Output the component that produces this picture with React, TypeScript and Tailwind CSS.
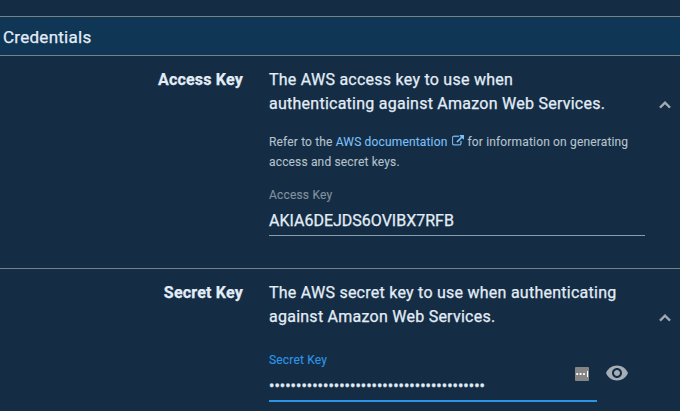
import React from "react";

const Chevron = () => (
  <svg viewBox="0 0 24 24" className="h-[22px] w-[22px] shrink-0" fill="#a3abb3">
    <path d="M12 8l-6 6 1.41 1.41L12 10.83l4.59 4.58L18 14z" stroke="#a3abb3" strokeWidth="0.6" />
  </svg>
);

const ExternalLink = () => (
  <svg viewBox="0 0 1792 1792" className="mr-[3px] ml-[5px] inline-block h-3 w-3 align-[-1px]" fill="currentColor" stroke="currentColor" strokeWidth="50">
    <path d="M1408 928v320q0 119-84.5 203.5t-203.5 84.5h-832q-119 0-203.5-84.5t-84.5-203.5v-832q0-119 84.5-203.5t203.5-84.5h704q14 0 23 9t9 23v64q0 14-9 23t-23 9h-704q-66 0-113 47t-47 113v832q0 66 47 113t113 47h832q66 0 113-47t47-113v-320q0-14 9-23t23-9h64q14 0 23 9t9 23zm384-864v512q0 26-19 45t-45 19-45-19l-176-176-652 652q-10 10-23 10t-23-10l-114-114q-10-10-10-23t10-23l652-652-176-176q-19-19-19-45t19-45 45-19h512q26 0 45 19t19 45z" />
  </svg>
);

const PasswordManager = () => (
  <svg viewBox="0 0 14 14" className="h-3.5 w-3.5">
    <rect width="14" height="14" rx="0.8" fill="#858585" />
    <g fill="#fff">
      <rect x="1.2" y="6" width="1.9" height="2" rx="0.4" />
      <rect x="4.6" y="6" width="1.9" height="2" rx="0.4" />
      <rect x="8" y="6" width="1.9" height="2" rx="0.4" />
      <rect x="12" y="4" width="1" height="6" />
    </g>
  </svg>
);

const Eye = () => (
  <svg viewBox="0 0 24 24" className="h-6 w-6" fill="#a5adb5">
    <path d="M12 4.5C7 4.5 2.73 7.61 1 12c1.73 4.39 6 7.5 11 7.5s9.27-3.11 11-7.5c-1.73-4.39-6-7.5-11-7.5zM12 17c-2.76 0-5-2.24-5-5s2.24-5 5-5 5 2.24 5 5-2.24 5-5 5zm0-8c-1.66 0-3 1.34-3 3s1.34 3 3 3 3-1.34 3-3-1.34-3-3-3z" />
  </svg>
);

export default function App() {
  return (
    <div className="flex h-[411px] w-[680px] flex-col overflow-hidden bg-[#152d44] font-['Roboto',sans-serif] text-base text-[#e3edf8] [-webkit-text-stroke:0.25px]">
      <header className="mt-4 flex h-10 shrink-0 items-center border-y border-[#75828a] bg-[#0f3654] pt-[3px] pl-[3px] text-[17px] tracking-[0.27px]">
        Credentials
      </header>

      <section className="flex h-[213px] shrink-0 border-b border-[#75828a] pt-3">
        <div className="w-[243px] text-right leading-6 font-bold tracking-[0.2px]">Access Key</div>
        <div className="ml-[26px] w-[376px]">
          <p className="leading-6 tracking-[0.25px]">
            The AWS access key to use when
            <br />
            authenticating against Amazon Web Services.
          </p>
          <p className="mt-4 text-xs leading-5 tracking-[0.16px] whitespace-nowrap text-[#b5c2cf] [-webkit-text-stroke:0.1px]">
            Refer to the <a className="text-[#7cc0f8]">AWS documentation<ExternalLink /></a>for information on generating
            <br />
            access and secret keys.
          </p>
          <label className="mt-[15px] block text-xs leading-4 tracking-[0.18px] text-[#7f919f] [-webkit-text-stroke:0.15px]">Access Key</label>
          <div className="h-[33px] border-b border-[#879ead] pt-[6px] leading-6">AKIA6DEJDS6OVIBX7RFB</div>
        </div>
        <div className="pt-[26px] pl-[9px]"><Chevron /></div>
      </section>

      <section className="flex flex-1 pt-3">
        <div className="w-[243px] text-right leading-6 font-bold tracking-[0.2px]">Secret Key</div>
        <div className="ml-[26px] w-[376px]">
          <p className="leading-6 tracking-[0.25px] whitespace-nowrap">
            The AWS secret key to use when authenticating
            <br />
            against Amazon Web Services.
          </p>
          <div className="mt-[23px] flex">
            <div className="h-[50px] w-[328px] border-b-2 border-[#2d94e3]">
              <label className="block text-xs leading-4 tracking-[0.18px] text-[#2d94e3] [-webkit-text-stroke:0.15px]">Secret Key</label>
              <div className="flex justify-between">
                <span className="pt-[6px] leading-6 [-webkit-text-stroke:0.3px]">{"•".repeat(40)}</span>
                <span className="-mt-[1px] mr-2"><PasswordManager /></span>
              </div>
            </div>
            <div className="mt-[9px] ml-2"><Eye /></div>
          </div>
        </div>
        <div className="pt-[26px] pl-[9px]"><Chevron /></div>
      </section>
    </div>
  );
}
